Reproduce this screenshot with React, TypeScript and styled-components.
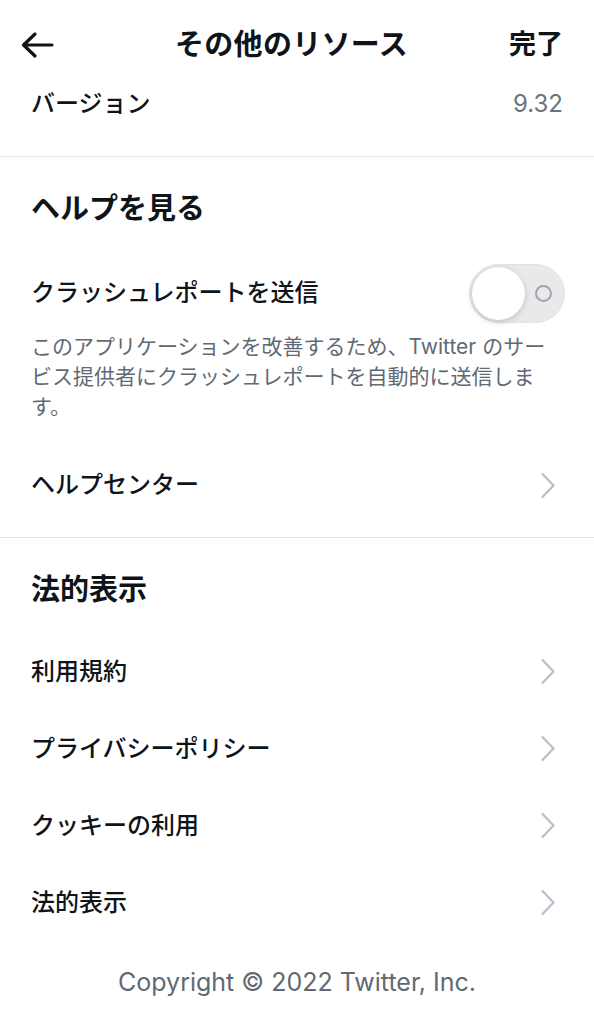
import styled, { createGlobalStyle } from 'styled-components';

const GlobalStyle = createGlobalStyle`
  html, body {
    margin: 0;
    padding: 0;
    background: #ffffff;
  }
  body {
    font-family: "Inter", "Noto Sans CJK JP", sans-serif;
    color: #0f1419;
  }
`;

const legalItems = ['利用規約', 'プライバシーポリシー', 'クッキーの利用', '法的表示'];

function BackArrow() {
  return (
    <svg width="34" height="28" viewBox="0 0 34 28" fill="none">
      <path d="M32 14H4M15 3L3.5 14L15 25" stroke="#0f1419" strokeWidth="3.2" strokeLinecap="round" strokeLinejoin="round" />
    </svg>
  );
}

function Chevron() {
  return (
    <svg width="16" height="27" viewBox="0 0 16 27" fill="none">
      <path d="M2.5 2L13.5 13.5L2.5 25" stroke="#b9c1c9" strokeWidth="2.4" strokeLinecap="round" strokeLinejoin="round" />
    </svg>
  );
}

export default function App() {
  return (
    <Screen>
      <GlobalStyle />
      <Header>
        <IconButton aria-label="戻る">
          <BackArrow />
        </IconButton>
        <HeaderTitle>その他のリソース</HeaderTitle>
        <DoneButton>完了</DoneButton>
      </Header>

      <VersionRow>
        <RowLabel>バージョン</RowLabel>
        <VersionValue>9.32</VersionValue>
      </VersionRow>

      <Divider />

      <SectionTitle>ヘルプを見る</SectionTitle>

      <ToggleRow>
        <RowLabel>クラッシュレポートを送信</RowLabel>
        <Toggle>
          <ToggleKnob />
          <ToggleOffMark />
        </Toggle>
      </ToggleRow>
      <Description>
        このアプリケーションを改善するため、Twitter のサービス提供者にクラッシュレポートを自動的に送信します。
      </Description>

      <HelpRow>
        <RowLabel>ヘルプセンター</RowLabel>
        <Chevron />
      </HelpRow>

      <Divider $top={22} />

      <SectionTitle>法的表示</SectionTitle>

      <LegalList>
        {legalItems.map((item) => (
          <LinkRow key={item}>
            <RowLabel>{item}</RowLabel>
            <Chevron />
          </LinkRow>
        ))}
      </LegalList>

      <Copyright>Copyright © 2022 Twitter, Inc.</Copyright>
    </Screen>
  );
}

const Screen = styled.div`
  width: 594px;
  min-height: 1024px;
  background: #ffffff;
  display: flex;
  flex-direction: column;
`;

const Header = styled.header`
  height: 90px;
  padding: 0 31px 0 20px;
  display: flex;
  align-items: center;
  justify-content: space-between;
`;

const IconButton = styled.button`
  border: none;
  background: none;
  padding: 0;
  display: flex;
  width: 80px;
`;

const HeaderTitle = styled.h1`
  margin: 0;
  font-size: 29px;
  line-height: 36px;
  font-weight: 700;
  letter-spacing: 0.3px;
`;

const DoneButton = styled.button`
  border: none;
  background: none;
  padding: 0;
  width: 80px;
  text-align: right;
  font-family: inherit;
  font-size: 27px;
  line-height: 36px;
  font-weight: 700;
  color: #0f1419;
`;

const RowLabel = styled.span`
  font-size: 24px;
  line-height: 30px;
  font-weight: 500;
  color: #0f1419;
`;

const VersionRow = styled.div`
  height: 28px;
  padding: 0 31px;
  display: flex;
  align-items: center;
  justify-content: space-between;
`;

const VersionValue = styled.span`
  font-size: 24px;
  line-height: 30px;
  color: #6b747d;
`;

const Divider = styled.hr<{ $top?: number }>`
  margin: ${({ $top }) => $top ?? 38}px 0 0;
  border: none;
  height: 1px;
  background: #e1e5e9;
`;

const SectionTitle = styled.h2`
  margin: 35px 0 0;
  padding: 0 31px;
  height: 34px;
  font-size: 29px;
  line-height: 34px;
  font-weight: 700;
`;

const ToggleRow = styled.div`
  margin-top: 37px;
  height: 60px;
  padding: 0 29px 0 31px;
  display: flex;
  align-items: center;
  justify-content: space-between;
`;

const Toggle = styled.div`
  position: relative;
  width: 96px;
  height: 59px;
  border-radius: 30px;
  background: #e9e9eb;
  box-sizing: border-box;
  border: 1px solid #e2e2e4;
`;

const ToggleKnob = styled.span`
  position: absolute;
  top: 2px;
  left: 2px;
  width: 53px;
  height: 53px;
  border-radius: 50%;
  background: #ffffff;
  box-shadow: 0 2px 6px rgba(0, 0, 0, 0.16), 0 0 1px rgba(0, 0, 0, 0.12);
`;

const ToggleOffMark = styled.span`
  position: absolute;
  top: 20px;
  right: 12px;
  width: 13px;
  height: 13px;
  border-radius: 50%;
  border: 2px solid #a4a4a8;
`;

const Description = styled.p`
  margin: 9px 0 0;
  padding: 0 31px;
  font-size: 21px;
  line-height: 30px;
  color: #5f6a74;
`;

const LinkRow = styled.div`
  height: 77px;
  padding: 0 38px 0 31px;
  display: flex;
  align-items: center;
  justify-content: space-between;
`;

const HelpRow = styled(LinkRow)`
  height: 60px;
  margin-top: 33px;
`;

const LegalList = styled.div`
  margin-top: 26px;
  display: flex;
  flex-direction: column;
`;

const Copyright = styled.div`
  margin-top: 26px;
  text-align: center;
  font-size: 25px;
  line-height: 30px;
  color: #5f6a74;
`;
